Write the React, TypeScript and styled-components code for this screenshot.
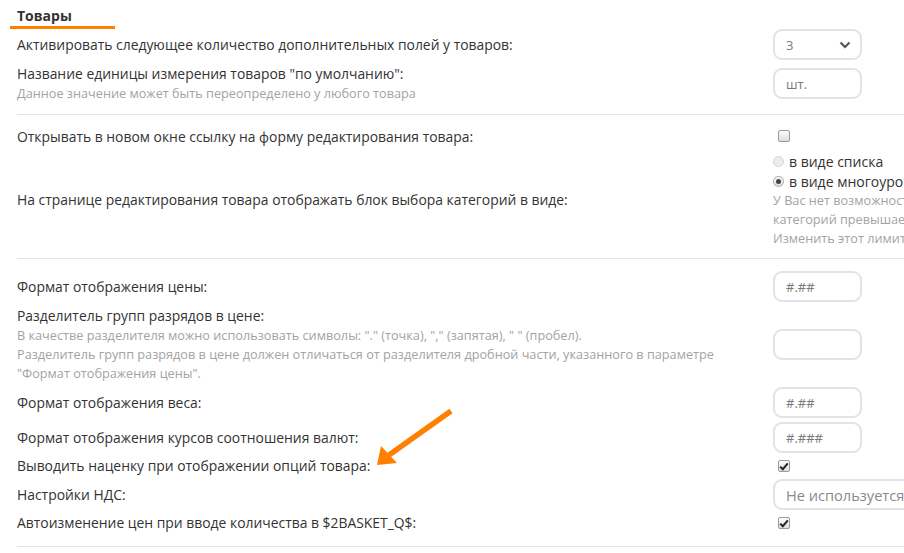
import React from 'react';
import styled, { createGlobalStyle } from 'styled-components';

const Global = createGlobalStyle`
  html, body { margin: 0; padding: 0; background: #fff; overflow: hidden; }
  body { font-family: "Open Sans", "Noto Sans", sans-serif; color: #333; }
  * { box-sizing: border-box; }
`;

const Page = styled.div`
  position: relative;
  width: 904px;
  height: 553px;
  overflow: hidden;
`;

const Content = styled.div`
  margin-left: 17px;
  width: 1150px;
`;

const Header = styled.div`
  margin-left: -7px;
  margin-bottom: -2px;
  padding: 6px 0 0 7px;
  width: 105px;
  height: 29px;
  border-bottom: 3px solid #ff7f00;
  font-size: 14px;
  line-height: 20px;
  font-weight: 700;
  color: #333;
`;

const Section = styled.div<{ $top: number; $bottom: number }>`
  padding-top: ${(p) => p.$top}px;
  padding-bottom: ${(p) => p.$bottom}px;
  border-bottom: 1px solid #e4e4e4;
`;

const Row = styled.div<{ $compact?: boolean }>`
  display: grid;
  grid-template-columns: 756px 1fr;
  align-items: center;
  padding: 2px 0;
  min-height: ${(p) => (p.$compact ? 22 : 24)}px;
`;

const Label = styled.div<{ $compact?: boolean }>`
  font-size: 13.9px;
  line-height: ${(p) => (p.$compact ? 18 : 20)}px;
  color: #333;
`;

const Hint = styled.div`
  font-size: 12.7px;
  line-height: 19px;
  color: #a3a3a3;
  white-space: nowrap;
`;

const Control = styled.div<{ $top?: boolean }>`
  display: flex;
  flex-direction: column;
  align-self: ${(p) => (p.$top ? 'start' : 'center')};
  padding-top: ${(p) => (p.$top ? 3 : 0)}px;
`;

const Field = styled.div<{ $w?: number; $big?: boolean }>`
  display: flex;
  align-items: center;
  justify-content: space-between;
  width: ${(p) => p.$w ?? 89}px;
  height: 31px;
  border: 2px solid #e2e2e8;
  border-radius: 9px;
  padding: 0 9px 0 11px;
  font-size: ${(p) => (p.$big ? 14.6 : 13)}px;
  color: ${(p) => (p.$big ? '#8a8a8a' : '#7a7a7a')};
  white-space: nowrap;
  background: #fff;
`;

const Box = styled.span<{ $checked?: boolean }>`
  display: inline-flex;
  align-items: center;
  justify-content: center;
  width: 12px;
  height: 12px;
  margin-left: 5px;
  border: 1px solid #9a9a9a;
  border-radius: 2px;
  background: linear-gradient(#fdfdfd, #dedede);
`;

const RadioLine = styled.div`
  display: flex;
  align-items: center;
  gap: 5px;
  height: 20px;
  font-size: 14px;
  color: #333;
  white-space: nowrap;
`;

const Radio = styled.span<{ $checked?: boolean }>`
  display: inline-flex;
  align-items: center;
  justify-content: center;
  width: 11px;
  height: 11px;
  border-radius: 50%;
  border: 1px solid ${(p) => (p.$checked ? '#a8a8a8' : '#d4d4d4')};
  background: ${(p) => (p.$checked ? 'linear-gradient(#fafafa,#e0e0e0)' : '#ececec')};
  &::after {
    content: '';
    display: ${(p) => (p.$checked ? 'block' : 'none')};
    width: 5px;
    height: 5px;
    border-radius: 50%;
    background: #444;
  }
`;

const Overlay = styled.svg`
  position: absolute;
  left: 0;
  top: 0;
  pointer-events: none;
`;

const Chevron = () => (
  <svg width="12" height="8" viewBox="0 0 12 8">
    <path d="M1.5 1.5 L6 6 L10.5 1.5" fill="none" stroke="#555" strokeWidth="2.2" />
  </svg>
);

const Check = () => (
  <svg width="10" height="9" viewBox="0 0 10 9">
    <path d="M1.2 4.6 L3.8 7.2 L8.8 1.4" fill="none" stroke="#222" strokeWidth="2" />
  </svg>
);

const Checkbox = ({ checked }: { checked?: boolean }) => (
  <Box $checked={checked}>{checked ? <Check /> : null}</Box>
);

export default function App() {
  return (
    <Page>
      <Global />
      <Content>
        <Header>Товары</Header>
        <Section $top={0} $bottom={9}>
          <Row>
            <Label>Активировать следующее количество дополнительных полей у товаров:</Label>
            <Control>
              <Field>
                <span>3</span>
                <Chevron />
              </Field>
            </Control>
          </Row>
          <Row>
            <div>
              <Label>Название единицы измерения товаров "по умолчанию":</Label>
              <Hint>Данное значение может быть переопределено у любого товара</Hint>
            </div>
            <Control>
              <Field>шт.</Field>
            </Control>
          </Row>
        </Section>
        <Section $top={10} $bottom={8}>
          <Row>
            <Label>Открывать в новом окне ссылку на форму редактирования товара:</Label>
            <Control $top>
              <Checkbox />
            </Control>
          </Row>
          <Row>
            <Label>На странице редактирования товара отображать блок выбора категорий в виде:</Label>
            <Control>
              <RadioLine>
                <Radio />в виде списка
              </RadioLine>
              <RadioLine>
                <Radio $checked />в виде многоуровневого дерева
              </RadioLine>
              <Hint>У Вас нет возможности изменить вид отображения, т.к. количество</Hint>
              <Hint>категорий превышает установленный лимит.</Hint>
              <Hint>Изменить этот лимит можно в настройках модуля.</Hint>
            </Control>
          </Row>
        </Section>
        <Section $top={10} $bottom={12}>
          <Row>
            <Label>Формат отображения цены:</Label>
            <Control>
              <Field>#.##</Field>
            </Control>
          </Row>
          <Row>
            <div>
              <Label>Разделитель групп разрядов в цене:</Label>
              <Hint>В качестве разделителя можно использовать символы: "." (точка), "," (запятая), " " (пробел).</Hint>
              <Hint>Разделитель групп разрядов в цене должен отличаться от разделителя дробной части, указанного в параметре</Hint>
              <Hint>"Формат отображения цены".</Hint>
            </div>
            <Control>
              <Field />
            </Control>
          </Row>
          <Row>
            <Label>Формат отображения веса:</Label>
            <Control>
              <Field>#.##</Field>
            </Control>
          </Row>
          <Row>
            <Label>Формат отображения курсов соотношения валют:</Label>
            <Control>
              <Field>#.###</Field>
            </Control>
          </Row>
          <Row $compact>
            <Label $compact>Выводить наценку при отображении опций товара:</Label>
            <Control>
              <Checkbox checked />
            </Control>
          </Row>
          <Row>
            <Label>Настройки НДС:</Label>
            <Control>
              <Field $w={200} $big>
                <span>Не используется</span>
              </Field>
            </Control>
          </Row>
          <Row $compact>
            <Label $compact>Автоизменение цен при вводе количества в $2BASKET_Q$:</Label>
            <Control>
              <Checkbox checked />
            </Control>
          </Row>
        </Section>
      </Content>
      <Overlay width="904" height="553" viewBox="0 0 904 553">
        <line x1="451" y1="411" x2="389" y2="455" stroke="#ff7f00" strokeWidth="5.5" strokeLinecap="butt" />
        <polygon points="377,465 381,446 397,463" fill="#ff7f00" />
      </Overlay>
    </Page>
  );
}
